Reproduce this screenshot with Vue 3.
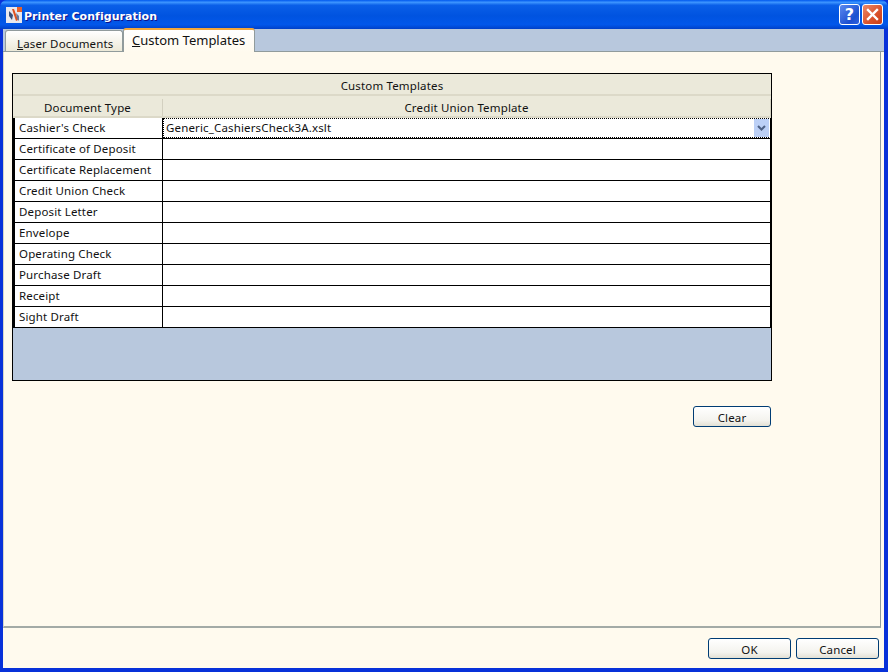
<script setup>
const rows = ["Certificate of Deposit","Certificate Replacement","Credit Union Check","Deposit Letter","Envelope","Operating Check","Purchase Draft","Receipt","Sight Draft"];
</script>

<template>
  <div class="window">
    <div class="titlebar">
      <svg class="appicon" width="16" height="16" viewBox="0 0 16 16">
        <rect x="0" y="0" width="16" height="16" fill="#e8e8ee"/>
        <rect x="11" y="0" width="5" height="5" fill="#e8622a"/>
        <path d="M3 4 L7 8 L6 13 L3 9Z" fill="#39507a"/>
        <path d="M6 2 L8 2 L12 13 L10 14Z" fill="#e2521d"/>
        <path d="M10 6 L13 9 L13 14 L11 12Z" fill="#6b7a98"/>
      </svg>
      <span class="title">Printer Configuration</span>
      <div class="capbtns">
        <div class="capbtn help">?</div>
        <div class="capbtn close">
          <svg width="13" height="13" viewBox="0 0 13 13"><path d="M2 2 L11 11 M11 2 L2 11" stroke="#fff" stroke-width="2.4" stroke-linecap="square"/></svg>
        </div>
      </div>
    </div>
    <div class="client">
      <div class="tabstrip">
        <div class="tab inactive"><u>L</u>aser Documents</div>
        <div class="tab active"><u>C</u>ustom Templates</div>
      </div>
      <div class="page">
        <div class="grid">
          <div class="caption">Custom Templates</div>
          <div class="row head">
            <div class="c1">Document Type</div>
            <div class="c2">Credit Union Template</div>
          </div>
          <div class="row body first">
            <div class="c1">Cashier's Check</div>
            <div class="c2 editing">
              <span>Generic_CashiersCheck3A.xslt</span>
              <span class="drop">
                <svg width="9" height="7" viewBox="0 0 9 7"><path d="M1 1 L4.5 4.5 L8 1" fill="none" stroke="#4d6185" stroke-width="2"/></svg>
              </span>
            </div>
          </div>
          <div v-for="r in rows" :key="r" class="row body">
            <div class="c1">{{ r }}</div>
            <div class="c2"></div>
          </div>
          <div class="empty"></div>
        </div>
        <div class="clearrow">
          <button class="btn clear">Clear</button>
        </div>
      </div>
      <div class="footer">
        <button class="btn ok">OK</button>
        <button class="btn cancel">Cancel</button>
      </div>
    </div>
  </div>
</template>

<style>
html, body { margin: 0; padding: 0; background: #fffaee; }
</style>

<style scoped>
.window {
  width: 888px;
  height: 672px;
  box-sizing: border-box;
  display: flex;
  flex-direction: column;
  background: #0831d9;
  font-family: "Noto Sans", sans-serif;
  font-size: 11.5px;
  letter-spacing: .15px;
  color: #111;
  overflow: hidden;
}
.titlebar {
  height: 29px;
  flex: none;
  box-sizing: border-box;
  display: flex;
  align-items: center;
  padding: 3px 5px 0 6px;
  background: linear-gradient(180deg, #0058ee 0%, #3d95ff 8%, #0a5fe8 18%, #0053e0 55%, #0257ea 85%, #0040c8 100%);
  border-radius: 7px 7px 0 0;
}
.appicon { margin-right: 1px; margin-top: -3px; }
.title {
  color: #fff;
  font-family: "DejaVu Sans", sans-serif;
  font-weight: bold;
  font-size: 11px;
  letter-spacing: .05px;
  margin-left: 1px;
  text-shadow: 1px 1px 0 #0f1089;
}
.capbtns { margin-left: auto; display: flex; gap: 2px; margin-top: -3px; }
.capbtn {
  width: 19px;
  height: 19px;
  border: 1px solid #fff;
  border-radius: 3px;
  display: flex;
  align-items: center;
  justify-content: center;
  color: #fff;
  font-family: "DejaVu Sans", sans-serif;
  font-weight: bold;
  font-size: 16px;
}
.help { background: linear-gradient(135deg, #5b8af0, #1c4fd0 70%, #2e62e0); }
.close { background: linear-gradient(135deg, #ec8a6a, #d9512a 60%, #c83d16); }
.client {
  flex: 1;
  margin: 0 4px 4px 3px;
  background: #fffaee;
  display: flex;
  flex-direction: column;
  min-height: 0;
}
.tabstrip {
  height: 23px;
  flex: none;
  box-sizing: border-box;
  background: #b8c8dd;
  display: flex;
  align-items: flex-end;
  padding-left: 2px;
  border-bottom: 1px solid #919b9c;
}
.tab {
  box-sizing: border-box;
  border: 1px solid #919b9c;
  border-bottom: none;
  border-radius: 3px 3px 0 0;
  white-space: nowrap;
}
.inactive {
  width: 118px;
  height: 21px;
  line-height: 25px;
  padding-left: 11px;
  background: linear-gradient(180deg, #fff, #ece9d8);
}
.active {
  width: 132px;
  height: 24px;
  line-height: 21px;
  padding-left: 8px;
  margin-bottom: -1px;
  background: linear-gradient(180deg, #fff, #fffaee);
  border-top: 2px solid #f2a63a;
  border-radius: 3px 3px 0 0;
  font-size: 13px;
  letter-spacing: 0;
  position: relative;
}
.page {
  height: 576px;
  flex: none;
  margin-right: 3px;
  box-sizing: border-box;
  border-left: 1px solid #d5d5c8;
  border-right: 1px solid #919b9c;
  border-bottom: 2px solid #a3aaa6;
  padding: 21px 0 0 8px;
  display: flex;
  flex-direction: column;
}
.grid {
  width: 760px;
  height: 308px;
  box-sizing: border-box;
  border: 1px solid #000;
  background: #b8c8dd;
  display: flex;
  flex-direction: column;
  flex: none;
}
.caption {
  height: 22px;
  box-sizing: border-box;
  background: #ebe9da;
  border-bottom: 2px solid #dcd9c8;
  text-align: center;
  line-height: 24px;
}
.row { display: flex; flex: none; }
.head {
  height: 22px;
  background: #ebe9da;
  border-bottom: 2px solid #dcd9c8;
  box-sizing: border-box;
  text-align: center;
}
.head .c1 { width: 149px; flex: none; border-right: 1px solid #d3d0c0; height: 17px; margin-top: 3px; line-height: 18px; }
.head .c2 { flex: 1; border-right: 1px solid #d3d0c0; height: 17px; margin-top: 3px; line-height: 18px; }
.body {
  height: 21px;
  box-sizing: border-box;
  background: #fff;
  border-bottom: 1px solid #000;
  line-height: 20px;
}
.body .c1 {
  width: 150px;
  flex: none;
  box-sizing: border-box;
  border-left: 2px solid #000;
  border-right: 1px solid #000;
  padding-left: 4px;
  white-space: nowrap;
}
.body .c2 { flex: 1; border-right: 1px solid #000; }
.editing {
  display: flex;
  align-items: center;
  justify-content: space-between;
  box-sizing: border-box;
  padding-left: 3px;
  outline: 1px dotted #000;
  outline-offset: -1px;
}
.drop {
  width: 15px;
  height: 18px;
  margin-right: 1px;
  background: #bcd0f6;
  display: flex;
  align-items: center;
  justify-content: center;
}
.empty { flex: 1; }
.clearrow {
  width: 759px;
  display: flex;
  justify-content: flex-end;
  margin-top: 25px;
}
.btn {
  box-sizing: border-box;
  height: 21px;
  border: 1px solid #003c74;
  border-radius: 3px;
  background: linear-gradient(180deg, #fff 0%, #f4f3ee 70%, #e3e0d4 100%);
  font-family: "Noto Sans", sans-serif;
  font-size: 11.5px;
  letter-spacing: .15px;
  color: #111;
  padding: 2px 0 0;
}
.clear { width: 78px; }
.footer {
  flex: 1;
  display: flex;
  justify-content: flex-end;
  align-items: flex-start;
  gap: 5px;
  padding: 10px 5px 0 0;
}
.ok, .cancel { width: 83px; }
</style>
